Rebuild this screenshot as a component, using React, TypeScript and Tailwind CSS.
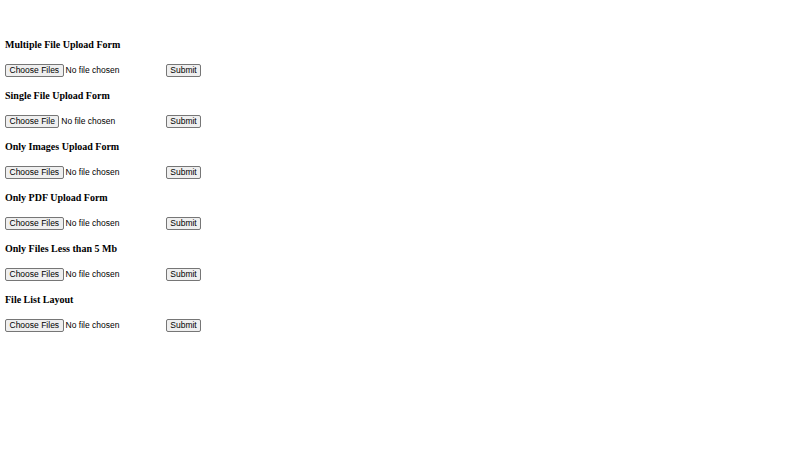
const forms = [
  { title: "Multiple File Upload Form", label: "Choose Files" },
  { title: "Single File Upload Form", label: "Choose File" },
  { title: "Only Images Upload Form", label: "Choose Files" },
  { title: "Only PDF Upload Form", label: "Choose Files" },
  { title: "Only Files Less than 5 Mb", label: "Choose Files" },
  { title: "File List Layout", label: "Choose Files" },
];

function FileRow({ label }: { label: string }) {
  return (
    <div className="flex items-center h-[13px] font-['Liberation_Sans',Arial,sans-serif] text-[8.5px] text-black">
      <div className="flex items-center w-[161px]">
        <button
          type="button"
          className="h-[13px] px-[3.5px] leading-none bg-[#efefef] border border-[#767676] rounded-[2px]"
        >
          {label}
        </button>
        <span className="ml-[2px]">No file chosen</span>
      </div>
      <button
        type="button"
        className="h-[13px] w-[35px] leading-none bg-[#efefef] border border-[#767676] rounded-[2px]"
      >
        Submit
      </button>
    </div>
  );
}

export default function App() {
  return (
    <div className="w-[800px] h-[450px] bg-white pt-[39px] pl-[5px]">
      <div className="flex flex-col gap-[13px]">
        {forms.map((f) => (
          <div key={f.title} className="flex flex-col gap-[13px]">
            <h4 className="h-[12px] leading-[12px] text-[10px] font-bold font-['Liberation_Serif','Times_New_Roman',serif] text-black">
              {f.title}
            </h4>
            <FileRow label={f.label} />
          </div>
        ))}
      </div>
    </div>
  );
}
